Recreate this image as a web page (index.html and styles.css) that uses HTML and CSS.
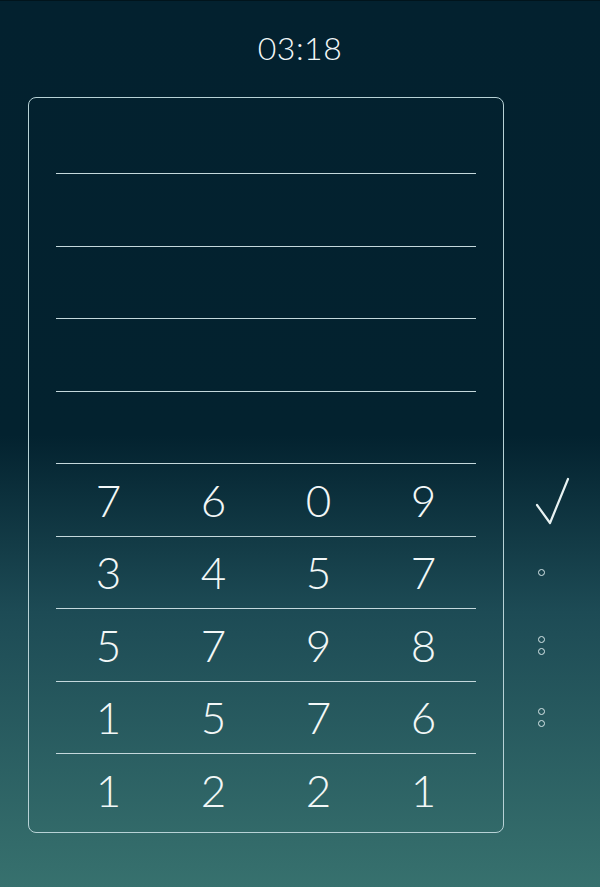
FILE: index.html
```html
<!DOCTYPE html>
<html>
<head>
<meta charset="utf-8">
<link rel="stylesheet" href="styles.css">
</head>
<body>
<div class="screen">
  <div class="timer">03:18</div>
  <div class="main">
    <div class="card">
      <div class="row"></div>
      <div class="row"></div>
      <div class="row"></div>
      <div class="row"></div>
      <div class="row"></div>
      <div class="row"><span>7</span><span>6</span><span>0</span><span>9</span></div>
      <div class="row"><span>3</span><span>4</span><span>5</span><span>7</span></div>
      <div class="row"><span>5</span><span>7</span><span>9</span><span>8</span></div>
      <div class="row"><span>1</span><span>5</span><span>7</span><span>6</span></div>
      <div class="row last"><span>1</span><span>2</span><span>2</span><span>1</span></div>
    </div>
    <div class="side">
      <div class="mark"></div>
      <div class="mark"></div>
      <div class="mark"></div>
      <div class="mark"></div>
      <div class="mark"></div>
      <div class="mark">
        <svg class="check" width="36" height="50" viewBox="0 0 36 50"><path d="M3 28 L16 46 L34 2" fill="none" stroke="#e8f2f2" stroke-width="2.2" stroke-linecap="round" stroke-linejoin="round"/></svg>
      </div>
      <div class="mark"><i class="dot"></i></div>
      <div class="mark"><div class="dots"><i class="dot"></i><i class="dot"></i></div></div>
      <div class="mark"><div class="dots"><i class="dot"></i><i class="dot"></i></div></div>
      <div class="mark"></div>
    </div>
  </div>
</div>
</body>
</html>
```
FILE: styles.css
```css
html, body {
  margin: 0;
  padding: 0;
}
body {
  width: 600px;
  height: 887px;
  overflow: hidden;
  font-family: "Lato", "Inter", sans-serif;
  color: #f2f7f7;
}
.screen {
  width: 600px;
  height: 887px;
  box-sizing: border-box;
  border-top: 1px solid #01141c;
  background: linear-gradient(180deg, #03212f 0%, #03222f 49%, #1d4b55 69%, #37716e 100%);
  display: flex;
  flex-direction: column;
}
.timer {
  text-align: center;
  font-size: 32px;
  font-weight: 300;
  letter-spacing: 0.5px;
  line-height: 40px;
  margin-top: 27px;
  height: 40px;
}
.main {
  display: flex;
  margin-top: 29px;
  padding-left: 28px;
}
.card {
  width: 476px;
  height: 736px;
  box-sizing: border-box;
  border: 1px solid #b7d2d6;
  border-radius: 8px;
  padding: 3.5px 27px 0 27px;
}
.row {
  height: 72.5px;
  box-sizing: border-box;
  border-bottom: 1px solid #c4d8dc;
  display: grid;
  grid-template-columns: repeat(4, 1fr);
  align-items: center;
  justify-items: center;
}
.row.last {
  border-bottom: none;
}
.row span {
  font-size: 44px;
  font-weight: 300;
  line-height: 1;
}
.side {
  width: 74px;
  padding-top: 4.5px;
  display: flex;
  flex-direction: column;
}
.mark {
  height: 72.5px;
  display: flex;
  align-items: center;
  justify-content: center;
}
.check {
  margin-left: 22px;
  margin-top: 4px;
}
.dots {
  display: flex;
  flex-direction: column;
  gap: 5px;
}
.dot {
  display: block;
  width: 5px;
  height: 5px;
  border: 1.3px solid #d6e6e8;
  border-radius: 50%;
}
```
